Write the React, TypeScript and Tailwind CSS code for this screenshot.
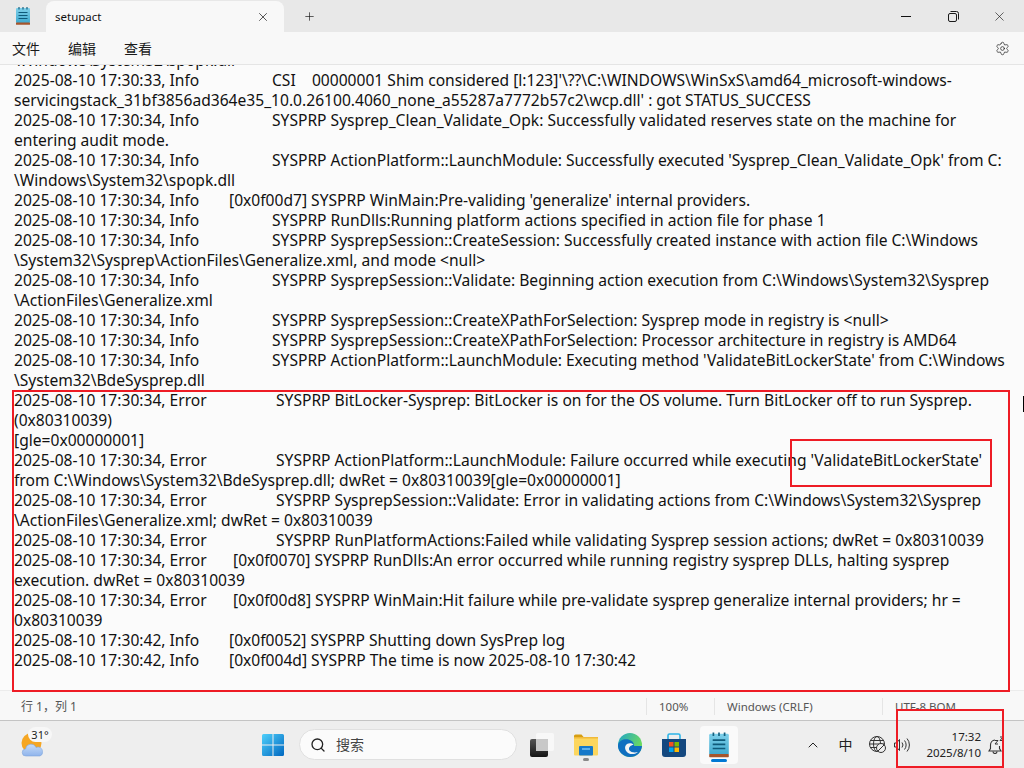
import React from 'react';
import { Search, Settings, X, Plus, ChevronUp } from 'lucide-react';

type Line = { stamp?: string; w?: string; text: string };

const INFO = 'w-[258px]';
const INFO_HEX = 'w-[215px]';
const ERR = 'w-[262px]';
const ERR_HEX = 'w-[219px]';

const lines: Line[] = [
  { text: '\\Windows\\System32\\spopk.dll' },
  { stamp: '2025-08-10 17:30:33, Info', w: INFO, text: "CSI    00000001 Shim considered [l:123]'\\??\\C:\\WINDOWS\\WinSxS\\amd64_microsoft-windows-" },
  { text: "servicingstack_31bf3856ad364e35_10.0.26100.4060_none_a55287a7772b57c2\\wcp.dll' : got STATUS_SUCCESS" },
  { stamp: '2025-08-10 17:30:34, Info', w: INFO, text: 'SYSPRP Sysprep_Clean_Validate_Opk: Successfully validated reserves state on the machine for' },
  { text: 'entering audit mode.' },
  { stamp: '2025-08-10 17:30:34, Info', w: INFO, text: "SYSPRP ActionPlatform::LaunchModule: Successfully executed 'Sysprep_Clean_Validate_Opk' from C:" },
  { text: '\\Windows\\System32\\spopk.dll' },
  { stamp: '2025-08-10 17:30:34, Info', w: INFO_HEX, text: "[0x0f00d7] SYSPRP WinMain:Pre-validing 'generalize' internal providers." },
  { stamp: '2025-08-10 17:30:34, Info', w: INFO, text: 'SYSPRP RunDlls:Running platform actions specified in action file for phase 1' },
  { stamp: '2025-08-10 17:30:34, Info', w: INFO, text: 'SYSPRP SysprepSession::CreateSession: Successfully created instance with action file C:\\Windows' },
  { text: '\\System32\\Sysprep\\ActionFiles\\Generalize.xml, and mode <null>' },
  { stamp: '2025-08-10 17:30:34, Info', w: INFO, text: 'SYSPRP SysprepSession::Validate: Beginning action execution from C:\\Windows\\System32\\Sysprep' },
  { text: '\\ActionFiles\\Generalize.xml' },
  { stamp: '2025-08-10 17:30:34, Info', w: INFO, text: 'SYSPRP SysprepSession::CreateXPathForSelection: Sysprep mode in registry is <null>' },
  { stamp: '2025-08-10 17:30:34, Info', w: INFO, text: 'SYSPRP SysprepSession::CreateXPathForSelection: Processor architecture in registry is AMD64' },
  { stamp: '2025-08-10 17:30:34, Info', w: INFO, text: "SYSPRP ActionPlatform::LaunchModule: Executing method 'ValidateBitLockerState' from C:\\Windows" },
  { text: '\\System32\\BdeSysprep.dll' },
  { stamp: '2025-08-10 17:30:34, Error', w: ERR, text: 'SYSPRP BitLocker-Sysprep: BitLocker is on for the OS volume. Turn BitLocker off to run Sysprep.' },
  { text: '(0x80310039)' },
  { text: '[gle=0x00000001]' },
  { stamp: '2025-08-10 17:30:34, Error', w: ERR, text: "SYSPRP ActionPlatform::LaunchModule: Failure occurred while executing 'ValidateBitLockerState'" },
  { text: 'from C:\\Windows\\System32\\BdeSysprep.dll; dwRet = 0x80310039[gle=0x00000001]' },
  { stamp: '2025-08-10 17:30:34, Error', w: ERR, text: 'SYSPRP SysprepSession::Validate: Error in validating actions from C:\\Windows\\System32\\Sysprep' },
  { text: '\\ActionFiles\\Generalize.xml; dwRet = 0x80310039' },
  { stamp: '2025-08-10 17:30:34, Error', w: ERR, text: 'SYSPRP RunPlatformActions:Failed while validating Sysprep session actions; dwRet = 0x80310039' },
  { stamp: '2025-08-10 17:30:34, Error', w: ERR_HEX, text: '[0x0f0070] SYSPRP RunDlls:An error occurred while running registry sysprep DLLs, halting sysprep' },
  { text: 'execution. dwRet = 0x80310039' },
  { stamp: '2025-08-10 17:30:34, Error', w: ERR_HEX, text: '[0x0f00d8] SYSPRP WinMain:Hit failure while pre-validate sysprep generalize internal providers; hr =' },
  { text: '0x80310039' },
  { stamp: '2025-08-10 17:30:42, Info', w: INFO_HEX, text: '[0x0f0052] SYSPRP Shutting down SysPrep log' },
  { stamp: '2025-08-10 17:30:42, Info', w: INFO_HEX, text: '[0x0f004d] SYSPRP The time is now 2025-08-10 17:30:42' },
];

const NotepadIcon = ({ id, size = 20 }: { id: string; size?: number }) => (
  <svg width={size} height={size} viewBox="0 0 20 20">
    <defs>
      <linearGradient id={id} x1="0" y1="0" x2="0" y2="1">
        <stop offset="0" stopColor="#7fd0ea" />
        <stop offset="1" stopColor="#3fa9cf" />
      </linearGradient>
    </defs>
    <rect x="3" y="2" width="14" height="15" rx="1" fill={`url(#${id})`} />
    <rect x="3" y="16.500" width="14" height="2.200" rx="0.500" fill="#a5552c" />
    <path d="M6 1v2.500M10 1v2.500M14 1v2.500" stroke="#14607f" strokeWidth="1.200" />
    <path d="M5.500 6.500h9M5.500 9.500h9M5.500 12.500h9" stroke="#0f5a7a" strokeWidth="1.200" />
  </svg>
);

const WeatherIcon = () => (
  <svg width="24" height="24" viewBox="0 0 24 24">
    <defs>
      <linearGradient id="cloud" x1="0" y1="0" x2="0" y2="1">
        <stop offset="0" stopColor="#c7dcf8" />
        <stop offset="1" stopColor="#8fb4ec" />
      </linearGradient>
    </defs>
    <circle cx="10.500" cy="10" r="10" fill="#f5a623" />
    <path d="M5 23a3.500 3.500 0 0 1-.5-7 5.500 5.500 0 0 1 10.500-1.500 4.500 4.500 0 0 1 6.500 4.200A4 4 0 0 1 19 23z" fill="url(#cloud)" stroke="#7fa6dc" strokeWidth="0.600" />
  </svg>
);

const WinLogo = () => (
  <svg width="24" height="24" viewBox="0 0 24 24">
    <defs>
      <linearGradient id="win" x1="0" y1="0" x2="1" y2="1">
        <stop offset="0" stopColor="#4fd0fb" />
        <stop offset="1" stopColor="#0067c0" />
      </linearGradient>
    </defs>
    <path d="M1 2.500A1.500 1.500 0 0 1 2.500 1h9v10.500H1zM12.500 1h9A1.500 1.500 0 0 1 23 2.500v9H12.500zM1 12.500h10.500V23h-9A1.500 1.500 0 0 1 1 21.500zM12.500 12.500H23v9a1.500 1.500 0 0 1-1.500 1.500h-9z" fill="url(#win)" />
  </svg>
);

const TaskView = () => (
  <svg width="24" height="24" viewBox="0 0 24 24">
    <defs>
      <linearGradient id="tv" x1="0" y1="0" x2="0" y2="1">
        <stop offset="0" stopColor="#555" />
        <stop offset="1" stopColor="#151515" />
      </linearGradient>
    </defs>
    <rect x="0" y="6" width="18" height="18" rx="2" fill="url(#tv)" />
    <rect x="6" y="0" width="18" height="18" rx="2" fill="#f8f8f8" />
    <rect x="6" y="6" width="12" height="12" fill="#c8c8c8" />
  </svg>
);

const FolderIcon = () => (
  <svg width="24" height="22" viewBox="0 0 24 22">
    <path d="M0 2a1.500 1.500 0 0 1 1.500-1.500h6L10 3.500H0z" fill="#d69e12" />
    <rect x="0" y="3" width="24" height="18.500" rx="1" fill="#fcd65e" />
    <rect x="0" y="3" width="24" height="1.500" fill="#f0b93a" />
    <rect x="5" y="12" width="14" height="9.500" rx="1" fill="#1679c9" />
    <rect x="8" y="14" width="8" height="2" fill="#5db0ea" />
  </svg>
);

const EdgeIcon = () => (
  <svg width="24" height="24" viewBox="0 0 24 24">
    <defs>
      <linearGradient id="edgeA" x1="0" y1="0" x2="1" y2="0.500">
        <stop offset="0" stopColor="#1fa4c9" />
        <stop offset="1" stopColor="#6fdc5c" />
      </linearGradient>
    </defs>
    <circle cx="12" cy="12" r="12" fill="url(#edgeA)" />
    <path d="M0 12C1 7.500 6 5.500 10.500 6.500c4 1 6 4 5.500 6.500h8c-.5 6.500-5.500 11-12 11C5 24 -.5 18 0 12z" fill="#0f6fc0" />
    <path d="M9 11c-3 2-2.500 7 2 9.500 2 1 6 1 9-1.500-3 1-7 .5-8.500-1.500-1-1.500-.5-3 .5-4s2-1.500 3.500-1.500C15 10 11 9.500 9 11z" fill="#f4f4f4" />
  </svg>
);

const StoreIcon = () => (
  <svg width="24" height="24" viewBox="0 0 24 24">
    <path d="M6 6V2.500a1.500 1.500 0 0 1 1.500-1.500h9A1.500 1.500 0 0 1 18 2.500V6" fill="none" stroke="#2cb4e8" strokeWidth="1.600" />
    <path d="M0 6h24v15a3 3 0 0 1-3 3H3a3 3 0 0 1-3-3z" fill="#14487f" />
    <rect x="7" y="9" width="4.500" height="4.500" fill="#f25022" />
    <rect x="12.500" y="9" width="4.500" height="4.500" fill="#7fba00" />
    <rect x="7" y="14.500" width="4.500" height="4.500" fill="#00a4ef" />
    <rect x="12.500" y="14.500" width="4.500" height="4.500" fill="#ffb900" />
  </svg>
);

const MaximizeIcon = () => (
  <svg width="11" height="11" viewBox="0 0 11 11" fill="none" stroke="#1a1a1a" strokeWidth="1">
    <rect x="0.500" y="2.500" width="8" height="8" rx="1.500" />
    <path d="M2.500 .5h6a2 2 0 0 1 2 2v6" />
  </svg>
);

const GlobeOff = () => (
  <svg width="17" height="17" viewBox="0 0 17 17" fill="none" stroke="#333" strokeWidth="1">
    <circle cx="8" cy="8" r="7.500" />
    <ellipse cx="8" cy="8" rx="3.500" ry="7.500" />
    <path d="M.5 8h15M1.500 4.500h13M1.500 11.500h13" />
    <circle cx="12" cy="12" r="4.500" fill="#eeeeee" />
    <path d="M9 15l6-6" />
  </svg>
);

const Speaker = () => (
  <svg width="16" height="16" viewBox="0 0 16 16" fill="none" stroke="#333" strokeWidth="1">
    <path d="M.5 6v4h2l3 3.500v-11L2.500 6z" />
    <path d="M8 5.500a4 4 0 0 1 0 5M10.500 3.500a7 7 0 0 1 0 9M13 1.500a10 10 0 0 1 0 13" />
  </svg>
);

const BellZ = () => (
  <svg width="16" height="18" viewBox="0 0 16 18" fill="none" stroke="#333" strokeWidth="1.100">
    <path d="M7 4a5 5 0 0 0-4.500 5v3.500L1 15h12l-1.500-2.500V10" />
    <path d="M5 15.500a2 2 0 0 0 4 0" />
    <path d="M7 4.500h3l-3 3.500h3M12 1h3l-3 3.500h3" strokeWidth="1" />
  </svg>
);

export default function App() {
  return (
    <div className="relative w-[1024px] h-[768px] overflow-hidden flex flex-col bg-[#fbfbfb] text-[#111] font-['Noto_Sans','Noto_Sans_CJK_SC',sans-serif]">
      {/* Title bar */}
      <div className="h-8 shrink-0 flex items-end bg-[#e8e8e8]">
        <div className="w-[46px] h-8 flex items-center justify-center">
          <NotepadIcon id="np-title" />
        </div>
        <div className="w-[238px] h-[31px] flex items-center justify-between pl-[9px] pr-[14px] bg-[#f8f8f8] rounded-t-lg">
          <span className="text-[11.500px]">setupact</span>
          <X size={14} strokeWidth={1.200} />
        </div>
        <div className="w-[50px] h-8 flex items-center justify-center">
          <Plus size={13} strokeWidth={1.200} />
        </div>
        <div className="ml-auto h-8 flex items-center mr-[2px]">
          <div className="w-[46px] flex justify-center">
            <div className="w-[10px] h-px bg-[#111] -translate-x-[1px]" />
          </div>
          <div className="w-[46px] flex justify-center">
            <MaximizeIcon />
          </div>
          <div className="w-[46px] flex justify-center">
            <X size={15} strokeWidth={1} />
          </div>
        </div>
      </div>

      {/* Menu */}
      <div className="h-[33px] shrink-0 flex items-center bg-[#f8f8f8] border-b border-[#e5e5e5] text-[14px] text-[#1a1a1a]">
        <span className="ml-3 w-[56px]">文件</span>
        <span className="w-[56px]">编辑</span>
        <span>查看</span>
        <Settings size={15} strokeWidth={1.100} className="ml-auto mr-[14px]" />
      </div>

      {/* Editor */}
      <div className="flex-1 min-h-0 overflow-hidden pl-[14px] text-[15.600px] leading-5 whitespace-pre">
        <div className="-mt-[15px]">
          {lines.map((line, i) => (
            <div key={i} className="h-5">
              {line.stamp && <span className={`inline-block ${line.w}`}>{line.stamp}</span>}
              {line.text}
            </div>
          ))}
        </div>
      </div>

      {/* Status bar */}
      <div className="h-[30px] shrink-0 flex items-center pt-[2px] bg-[#f8f8f8] border-t border-[#ececec] text-[11.500px] text-[#555]">
        <span className="ml-[21px] text-[12px]">行 1，列 1</span>
        <span className="ml-auto w-[68px] pl-3 border-l border-[#e5e5e5]">100%</span>
        <span className="w-[168px] pl-3 border-l border-[#e5e5e5]">Windows (CRLF)</span>
        <span className="w-[142px] pl-3 border-l border-[#e5e5e5]">UTF-8 BOM</span>
      </div>

      {/* Taskbar */}
      <div className="h-[48px] shrink-0 relative flex items-center pl-[261px] bg-[#eeeeee] border-t border-[#c4c4c4]">
        <div className="absolute left-[21px] top-[12px]">
          <WeatherIcon />
          <span className="absolute left-[7px] -top-[6px] w-[24px] text-center rounded-full bg-[#f7f7f7] text-[11px] leading-[15px] text-[#222]">31°</span>
        </div>
        <WinLogo />
        <div className="ml-[14px] w-[218px] h-[31px] flex items-center gap-[10px] pl-[10px] rounded-full bg-[#fbfbfb] border border-[#e0e0e0] text-[14px] text-[#444]">
          <Search size={16} className="text-[#222]" />
          搜索
        </div>
        <span className="ml-[13px]"><TaskView /></span>
        <div className="relative ml-[20px]">
          <FolderIcon />
          <span className="absolute left-[9px] -bottom-[5px] w-[6px] h-[3px] rounded-full bg-[#888]" />
        </div>
        <span className="ml-[20px]"><EdgeIcon /></span>
        <span className="ml-[20px]"><StoreIcon /></span>
        <div className="relative ml-[14px] w-[38px] h-[38px] flex items-center justify-center rounded bg-[#fafafa]">
          <NotepadIcon id="np-task" size={28} />
          <span className="absolute left-[11px] bottom-[2px] w-[16px] h-[3px] rounded-full bg-[#0078d4]" />
        </div>
        <div className="absolute right-[20px] inset-y-0 flex items-center text-[#222]">
          <ChevronUp size={16} strokeWidth={1.500} />
          <span className="ml-[17px] text-[14px]">中</span>
          <span className="ml-[17px]"><GlobeOff /></span>
          <span className="ml-[8px]"><Speaker /></span>
          <div className="ml-[16px] text-right text-[11.500px] leading-[16px]">
            <div>17:32</div>
            <div>2025/8/10</div>
          </div>
          <span className="ml-[7px]"><BellZ /></span>
        </div>
      </div>

      {/* Red annotations */}
      <div className="absolute left-[12px] top-[390px] w-[998px] h-[302px] border-2 border-[#ee1c25]" />
      <div className="absolute left-[790px] top-[439px] w-[202px] h-[48px] border-2 border-[#ee1c25]" />
      <div className="absolute left-[896px] top-[709px] w-[108px] h-[59px] border-2 border-[#ee1c25]" />
      {/* mouse caret at the edge */}
      <div className="absolute left-[1023px] top-[396px] w-px h-4 bg-black" />
    </div>
  );
}
